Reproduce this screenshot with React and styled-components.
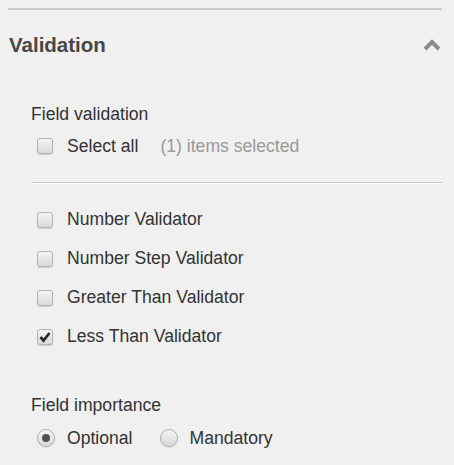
import React, { useState } from "react";
import styled, { createGlobalStyle } from "styled-components";

const GlobalStyle = createGlobalStyle`
  html, body {
    margin: 0;
    padding: 0;
    background: #f0f0f0;
  }
  body {
    font-family: "Liberation Sans", Arial, sans-serif;
  }
`;

const Panel = styled.div`
  width: 434px;
  margin: 8px 12px 0 8px;
  border-top: 2px solid #cccccc;
`;

const Header = styled.div`
  display: flex;
  align-items: center;
  justify-content: space-between;
  padding: 23px 1px 0 1px;
  height: 24px;
`;

const Title = styled.h2`
  margin: 0;
  font-size: 20.5px;
  line-height: 24px;
  font-weight: bold;
  color: #474747;
`;

const Toggle = styled.button`
  background: none;
  border: none;
  padding: 0;
  margin: 0;
  display: flex;
  cursor: pointer;
`;

const Body = styled.div`
  padding: 47px 0 0 23px;
  color: #333333;
  font-size: 17.6px;
`;

const GroupLabel = styled.div`
  line-height: 20px;
  height: 20px;
  color: #333333;
  margin-top: ${(p) => p.gap || 0}px;
`;

const Row = styled.label`
  display: flex;
  align-items: center;
  height: ${(p) => p.height || 39}px;
  margin-top: ${(p) => p.gap || 0}px;
  padding-left: 6px;
  cursor: pointer;
  user-select: none;
`;

const Box = styled.span`
  width: 14px;
  height: 14px;
  flex: none;
  border: 1px solid #b3b3b3;
  border-radius: 3px;
  background: linear-gradient(#f4f4f4, #d9d9d9);
  box-shadow: 0 1px 1px rgba(0, 0, 0, 0.14);
  display: flex;
  align-items: center;
  justify-content: center;
  margin-right: 14px;
`;

const Round = styled.span`
  width: 16px;
  height: 16px;
  flex: none;
  border: 1px solid #b0b0b0;
  border-radius: 50%;
  background: linear-gradient(#f4f4f4, #d9d9d9);
  box-shadow: 0 1px 1px rgba(0, 0, 0, 0.1);
  display: flex;
  align-items: center;
  justify-content: center;
  margin-right: 12px;
  &::after {
    content: "";
    width: 8px;
    height: 8px;
    border-radius: 50%;
    background: ${(p) => (p.checked ? "#505050" : "transparent")};
  }
`;

const Hidden = styled.input`
  display: none;
`;

const Muted = styled.span`
  color: #9a9a9a;
  margin-left: 22px;
`;

const Divider = styled.div`
  height: 1px;
  background: #c6c6c6;
  border-bottom: 1px solid #ffffff;
  margin: 21px 0 16px 0;
`;

const RadioGroup = styled.div`
  display: flex;
  gap: 27px;
  margin-top: 8px;
`;

const RadioItem = styled(Row)`
  height: 30px;
  padding-left: ${(p) => (p.first ? 6 : 0)}px;
`;

const Chevron = () => (
  <svg width="18" height="12" viewBox="0 0 18 12">
    <polyline
      points="2,10 9,3 16,10"
      fill="none"
      stroke="#8a8a8a"
      strokeWidth="4"
      strokeLinejoin="miter"
    />
  </svg>
);

const Check = () => (
  <svg width="12" height="12" viewBox="0 0 12 12">
    <polyline
      points="1.5,6 4.5,9.5 10.5,2"
      fill="none"
      stroke="#2b2b2b"
      strokeWidth="2.8"
    />
  </svg>
);

const Checkbox = ({ checked, onChange }) => (
  <>
    <Hidden type="checkbox" checked={checked} onChange={onChange} />
    <Box>{checked ? <Check /> : null}</Box>
  </>
);

const validators = [
  "Number Validator",
  "Number Step Validator",
  "Greater Than Validator",
  "Less Than Validator",
];

export default function App() {
  const [open, setOpen] = useState(true);
  const [selected, setSelected] = useState([false, false, false, true]);
  const [importance, setImportance] = useState("optional");

  const count = selected.filter(Boolean).length;
  const allSelected = count === selected.length;

  const toggle = (i) =>
    setSelected((prev) => prev.map((v, j) => (j === i ? !v : v)));

  return (
    <>
      <GlobalStyle />
      <Panel>
        <Header>
          <Title>Validation</Title>
          <Toggle onClick={() => setOpen((o) => !o)}>
            <Chevron />
          </Toggle>
        </Header>
        {open ? (
          <Body>
            <GroupLabel>Field validation</GroupLabel>
            <Row height={30} gap={7}>
              <Checkbox
                checked={allSelected}
                onChange={() => setSelected(selected.map(() => !allSelected))}
              />
              Select all
              <Muted>({count}) items selected</Muted>
            </Row>
            <Divider />
            {validators.map((name, i) => (
              <Row key={name}>
                <Checkbox checked={selected[i]} onChange={() => toggle(i)} />
                {name}
              </Row>
            ))}
            <GroupLabel gap={39}>Field importance</GroupLabel>
            <RadioGroup>
              <RadioItem first onClick={() => setImportance("optional")}>
                <Round checked={importance === "optional"} />
                Optional
              </RadioItem>
              <RadioItem onClick={() => setImportance("mandatory")}>
                <Round checked={importance === "mandatory"} />
                Mandatory
              </RadioItem>
            </RadioGroup>
          </Body>
        ) : null}
      </Panel>
    </>
  );
}
